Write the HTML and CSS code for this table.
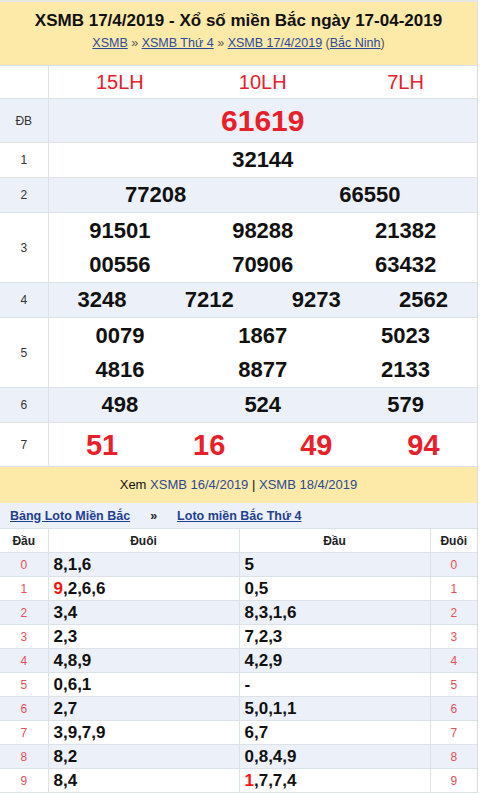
FILE: index.html
```html
<!DOCTYPE html>
<html lang="vi">
<head>
<meta charset="utf-8">
<title>XSMB 17/4/2019</title>
<link rel="stylesheet" href="styles.css">
</head>
<body>
<div class="page">
  <div class="head">
    <h1>XSMB 17/4/2019 - Xổ số miền Bắc ngày 17-04-2019</h1>
    <div class="crumb"><a href="#">XSMB</a> » <a href="#">XSMB Thứ 4</a> » <a href="#">XSMB 17/4/2019</a> (<a href="#">Bắc Ninh</a>)</div>
  </div>
  <table class="kq">
    <colgroup><col class="c-lbl"><col></colgroup>
    <tr class="r-code">
      <td></td>
      <td><div class="nums n3 code"><span>15LH</span><span>10LH</span><span>7LH</span></div></td>
    </tr>
    <tr class="alt r-db">
      <td>ĐB</td>
      <td><div class="nums n1 db"><span>61619</span></div></td>
    </tr>
    <tr class="r-one">
      <td>1</td>
      <td><div class="nums n1"><span>32144</span></div></td>
    </tr>
    <tr class="alt r-one">
      <td>2</td>
      <td><div class="nums n2"><span>77208</span><span>66550</span></div></td>
    </tr>
    <tr class="r-two">
      <td>3</td>
      <td><div class="nums n3"><span>91501</span><span>98288</span><span>21382</span><span>00556</span><span>70906</span><span>63432</span></div></td>
    </tr>
    <tr class="alt r-one">
      <td>4</td>
      <td><div class="nums n4"><span>3248</span><span>7212</span><span>9273</span><span>2562</span></div></td>
    </tr>
    <tr class="r-two">
      <td>5</td>
      <td><div class="nums n3"><span>0079</span><span>1867</span><span>5023</span><span>4816</span><span>8877</span><span>2133</span></div></td>
    </tr>
    <tr class="alt r-one">
      <td>6</td>
      <td><div class="nums n3"><span>498</span><span>524</span><span>579</span></div></td>
    </tr>
    <tr class="r-db">
      <td>7</td>
      <td><div class="nums n4 g7"><span>51</span><span>16</span><span>49</span><span>94</span></div></td>
    </tr>
  </table>
  <div class="xem">Xem <a href="#">XSMB 16/4/2019</a> | <a href="#">XSMB 18/4/2019</a></div>
  <div class="links"><a href="#">Bảng Loto Miền Bắc</a><span class="sep">»</span><a href="#">Loto miền Bắc Thứ 4</a></div>
  <table class="loto">
    <colgroup><col class="c-idx"><col><col><col class="c-idx2"></colgroup>
    <tr><th>Đầu</th><th>Đuôi</th><th>Đầu</th><th>Đuôi</th></tr>
    <tr class="alt"><td class="idx">0</td><td class="v">8,1,6</td><td class="v">5</td><td class="idx">0</td></tr>
    <tr><td class="idx">1</td><td class="v"><span class="hot">9</span>,2,6,6</td><td class="v">0,5</td><td class="idx">1</td></tr>
    <tr class="alt"><td class="idx">2</td><td class="v">3,4</td><td class="v">8,3,1,6</td><td class="idx">2</td></tr>
    <tr><td class="idx">3</td><td class="v">2,3</td><td class="v">7,2,3</td><td class="idx">3</td></tr>
    <tr class="alt"><td class="idx">4</td><td class="v">4,8,9</td><td class="v">4,2,9</td><td class="idx">4</td></tr>
    <tr><td class="idx">5</td><td class="v">0,6,1</td><td class="v">-</td><td class="idx">5</td></tr>
    <tr class="alt"><td class="idx">6</td><td class="v">2,7</td><td class="v">5,0,1,1</td><td class="idx">6</td></tr>
    <tr><td class="idx">7</td><td class="v">3,9,7,9</td><td class="v">6,7</td><td class="idx">7</td></tr>
    <tr class="alt"><td class="idx">8</td><td class="v">8,2</td><td class="v">0,8,4,9</td><td class="idx">8</td></tr>
    <tr><td class="idx">9</td><td class="v">8,4</td><td class="v"><span class="hot">1</span>,7,7,4</td><td class="idx">9</td></tr>
  </table>
</div>
</body>
</html>
```
FILE: styles.css
```css
* { box-sizing: border-box; }
body {
  margin: 0;
  background: #fff;
  font-family: "Liberation Sans", Arial, sans-serif;
  color: #111;
}
.page {
  width: 478px;
  border-top: 2px solid #e6e6e6;
  border-right: 1px solid #d8dce2;
}
.head {
  background: #fde9a8;
  text-align: center;
  padding: 9px 0 14px;
}
.head h1 {
  margin: 0;
  font-size: 17px;
  line-height: 20px;
  font-weight: bold;
  color: #111;
}
.crumb {
  margin-top: 4px;
  font-size: 12.5px;
  line-height: 16px;
  color: #555;
}
.crumb a { color: #2c4a9b; text-decoration: underline; }

table {
  width: 100%;
  border-collapse: collapse;
  table-layout: fixed;
}
.c-lbl { width: 48px; }
.kq td {
  border: 1px solid #dde2e9;
  padding: 0;
  text-align: center;
  vertical-align: middle;
}
.kq td:first-child {
  border-left: none;
  font-size: 12px;
  color: #333;
}
.kq td:last-child { border-right: none; }
.alt { background: #ecf0f8; }

.r-code td { height: 33px; }
.r-db td { height: 44px; }
.r-one td { height: 35px; }
.r-two td { height: 70px; }

.nums { display: grid; }
.n1 { grid-template-columns: 1fr; }
.n2 { grid-template-columns: repeat(2, 1fr); }
.n3 { grid-template-columns: repeat(3, 1fr); }
.n4 { grid-template-columns: repeat(4, 1fr); }
.nums span {
  font-size: 22px;
  font-weight: bold;
  line-height: 34px;
  color: #111;
}
.code span {
  font-size: 20px;
  font-weight: normal;
  line-height: 30px;
  color: #e5202c;
}
.db span {
  font-size: 30px;
  line-height: 40px;
  color: #e8202a;
}
.g7 span {
  font-size: 29px;
  line-height: 40px;
  color: #e8202a;
}

.xem {
  background: #fde9a8;
  text-align: center;
  font-size: 13px;
  height: 36px;
  line-height: 36px;
  color: #111;
}
.xem a { color: #2c4a8e; text-decoration: none; }

.links {
  background: #ecf0f8;
  height: 25px;
  display: flex;
  align-items: center;
  padding-left: 10px;
  font-size: 12.5px;
  font-weight: bold;
}
.links a { color: #1f3f91; text-decoration: underline; }
.links .sep { margin: 0 20px; color: #222; }

.c-idx { width: 48px; }
.c-idx2 { width: 47px; }
.loto th, .loto td {
  border: 1px solid #dde2e9;
  padding: 0;
  height: 24px;
}
.loto tr > :first-child { border-left: none; }
.loto tr > :last-child { border-right: none; }
.loto th {
  font-size: 12px;
  font-weight: bold;
  color: #222;
  text-align: center;
}
.loto .idx {
  text-align: center;
  font-size: 12px;
  color: #e5505a;
}
.loto .v {
  padding-left: 5px;
  font-size: 17px;
  font-weight: bold;
  color: #111;
}
.hot { color: #ff1010; }
```
